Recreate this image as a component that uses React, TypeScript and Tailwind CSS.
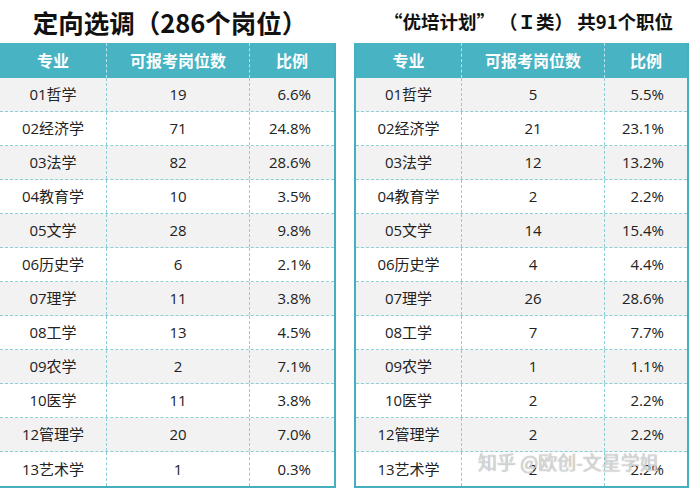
import React from "react";

type Row = [string, string, string];

const left: Row[] = [
  ["01哲学", "19", "6.6%"],
  ["02经济学", "71", "24.8%"],
  ["03法学", "82", "28.6%"],
  ["04教育学", "10", "3.5%"],
  ["05文学", "28", "9.8%"],
  ["06历史学", "6", "2.1%"],
  ["07理学", "11", "3.8%"],
  ["08工学", "13", "4.5%"],
  ["09农学", "2", "7.1%"],
  ["10医学", "11", "3.8%"],
  ["12管理学", "20", "7.0%"],
  ["13艺术学", "1", "0.3%"],
];

const right: Row[] = [
  ["01哲学", "5", "5.5%"],
  ["02经济学", "21", "23.1%"],
  ["03法学", "12", "13.2%"],
  ["04教育学", "2", "2.2%"],
  ["05文学", "14", "15.4%"],
  ["06历史学", "4", "4.4%"],
  ["07理学", "26", "28.6%"],
  ["08工学", "7", "7.7%"],
  ["09农学", "1", "1.1%"],
  ["10医学", "2", "2.2%"],
  ["12管理学", "2", "2.2%"],
  ["13艺术学", "2", "2.2%"],
];

function Table({ rows, cols, className }: { rows: Row[]; cols: string; className: string }) {
  return (
    <div className={`border-b-2 border-[#45aebf] ${className}`}>
      <div className={`grid ${cols} h-[35px] bg-[#48b3c3] text-white font-bold text-[16px]`}>
        <div className="flex items-center justify-center border-r border-dashed border-[#b9e3ea]">专业</div>
        <div className="flex items-center justify-center border-r border-dashed border-[#b9e3ea]">可报考岗位数</div>
        <div className="flex items-center justify-center">比例</div>
      </div>
      {rows.map((r, i) => (
        <div
          key={i}
          className={`grid ${cols} h-[34px] text-[15px] text-[#222] ${i % 2 === 0 ? "bg-[#f2f2f2]" : "bg-white"} ${i < rows.length - 1 ? "border-b border-dashed border-[#8dcfd8]" : ""}`}
        >
          <div className="flex items-center justify-center border-r border-dashed border-[#8dcfd8]">{r[0]}</div>
          <div className="flex items-center justify-center border-r border-dashed border-[#8dcfd8]">{r[1]}</div>
          <div className="flex items-center justify-end pr-[23px]">{r[2]}</div>
        </div>
      ))}
    </div>
  );
}

export default function App() {
  return (
    <div
      className="relative w-[692px] h-[490px] bg-white overflow-hidden"
      style={{ fontFamily: '"Open Sans", "Noto Sans CJK SC", sans-serif' }}
    >
      <div className="flex gap-[18px]">
        <div className="flex flex-col w-[336px]">
          <div
            className="h-[43px] flex items-center justify-center pl-[4px] text-[25.5px] font-bold text-[#111] leading-none"
            style={{ fontFamily: '"Noto Sans CJK SC", sans-serif' }}
          >
            定向选调（286个岗位）
          </div>
          <Table rows={left} cols="grid-cols-[107px_143px_1fr]" className="border-r-2" />
        </div>
        <div className="flex flex-col w-[335px]">
          <div
            className="h-[43px] flex items-center justify-center pl-[14px] text-[18.5px] font-bold text-[#111] leading-none"
            style={{ fontFamily: '"Noto Sans CJK SC", sans-serif' }}
          >
            “优培计划” （Ｉ类） 共91个职位
          </div>
          <Table rows={right} cols="grid-cols-[106px_143px_1fr]" className="border-x-2" />
        </div>
      </div>
      <div
        className="absolute left-[478px] top-[448px] text-[19px] text-[rgba(235,235,235,0.8)] [text-shadow:0_0_1px_rgba(80,80,80,0.7)] whitespace-nowrap"
        style={{ fontFamily: '"Noto Sans CJK SC", sans-serif' }}
      >
        知乎 @欧创-文星学姐
      </div>
    </div>
  );
}
